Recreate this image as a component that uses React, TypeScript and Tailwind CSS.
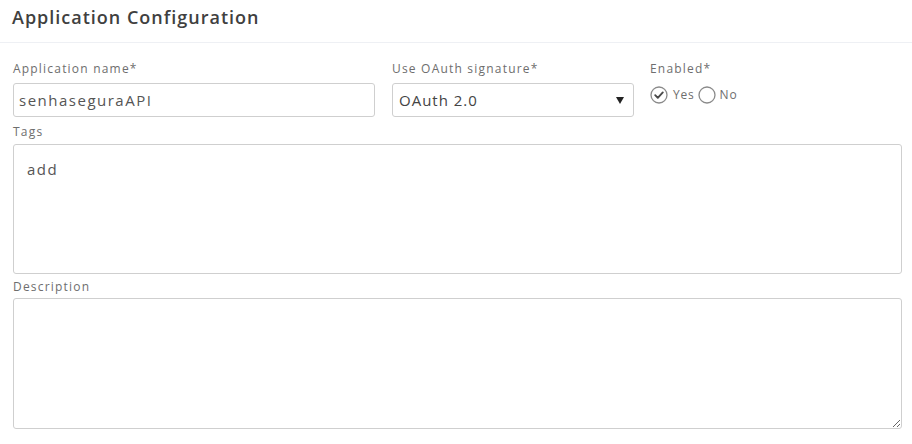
import React from 'react';

const font = { fontFamily: '"Open Sans", "Liberation Sans", sans-serif' };

function Label({ children }: { children: React.ReactNode }) {
  return <div className="text-[12px] leading-[14px] tracking-[1.2px] text-[#6e6e6e]">{children}</div>;
}

function RadioCircle({ checked }: { checked?: boolean }) {
  return (
    <svg width="18" height="18" viewBox="0 0 18 18" aria-hidden="true">
      <circle cx="9" cy="9" r="8" fill="white" stroke="#8a8a8a" strokeWidth="1.3" />
      {checked && (
        <path d="M5.2 9.2 L7.8 11.8 L12.8 6.4" fill="none" stroke="#4a4a4a" strokeWidth="1.9" strokeLinecap="round" strokeLinejoin="round" />
      )}
    </svg>
  );
}

export default function App() {
  return (
    <div className="w-[912px] h-[444px] bg-white overflow-hidden" style={font}>
      {/* Header */}
      <div className="h-[43px] px-3 pb-[8px] flex items-center border-b border-[#eef0f4]">
        <h2 className="text-[18px] font-semibold tracking-[1px] text-[#404040]">Application Configuration</h2>
      </div>

      <div className="px-[13px] pt-[19px] pr-[10px]">
        {/* First row */}
        <div className="flex">
          <div className="w-[362px]">
            <Label>Application name*</Label>
            <div className="mt-[7px] h-[34px] border border-[#cfcfcf] rounded-[3px] px-[5px] flex items-center text-[15px] tracking-[1.5px] text-[#555]">
              senhaseguraAPI
            </div>
          </div>
          <div className="w-[242px] ml-[17px]">
            <Label>Use OAuth signature*</Label>
            <div className="mt-[7px] h-[34px] border border-[#cfcfcf] rounded-[3px] pl-[6px] pr-[9px] flex items-center justify-between text-[15px] tracking-[1px] text-[#444]">
              <span>OAuth 2.0</span>
              <svg width="8" height="7" viewBox="0 0 8 7" aria-hidden="true">
                <path d="M0 0 H8 L4 7 Z" fill="#222" />
              </svg>
            </div>
          </div>
          <div className="ml-[16px]">
            <Label>Enabled*</Label>
            <div className="mt-[10px] flex items-center text-[12px] tracking-[0.8px] text-[#6e6e6e]">
              <RadioCircle checked />
              <span className="ml-[5px]">Yes</span>
              <span className="ml-[3px] flex"><RadioCircle /></span>
              <span className="ml-[4px]">No</span>
            </div>
          </div>
        </div>

        {/* Tags */}
        <div className="mt-[8px]">
          <Label>Tags</Label>
          <div className="mt-[5px] h-[130px] border border-[#cfcfcf] rounded-[3px] px-[13px] pt-[13px] text-[15px] tracking-[1.5px] text-[#555]">
            add
          </div>
        </div>

        {/* Description */}
        <div className="mt-[6px]">
          <Label>Description</Label>
          <textarea
            className="mt-[4px] block w-full h-[131px] border border-[#cfcfcf] rounded-[3px] outline-none resize-y"
            defaultValue=""
          />
        </div>
      </div>
    </div>
  );
}
